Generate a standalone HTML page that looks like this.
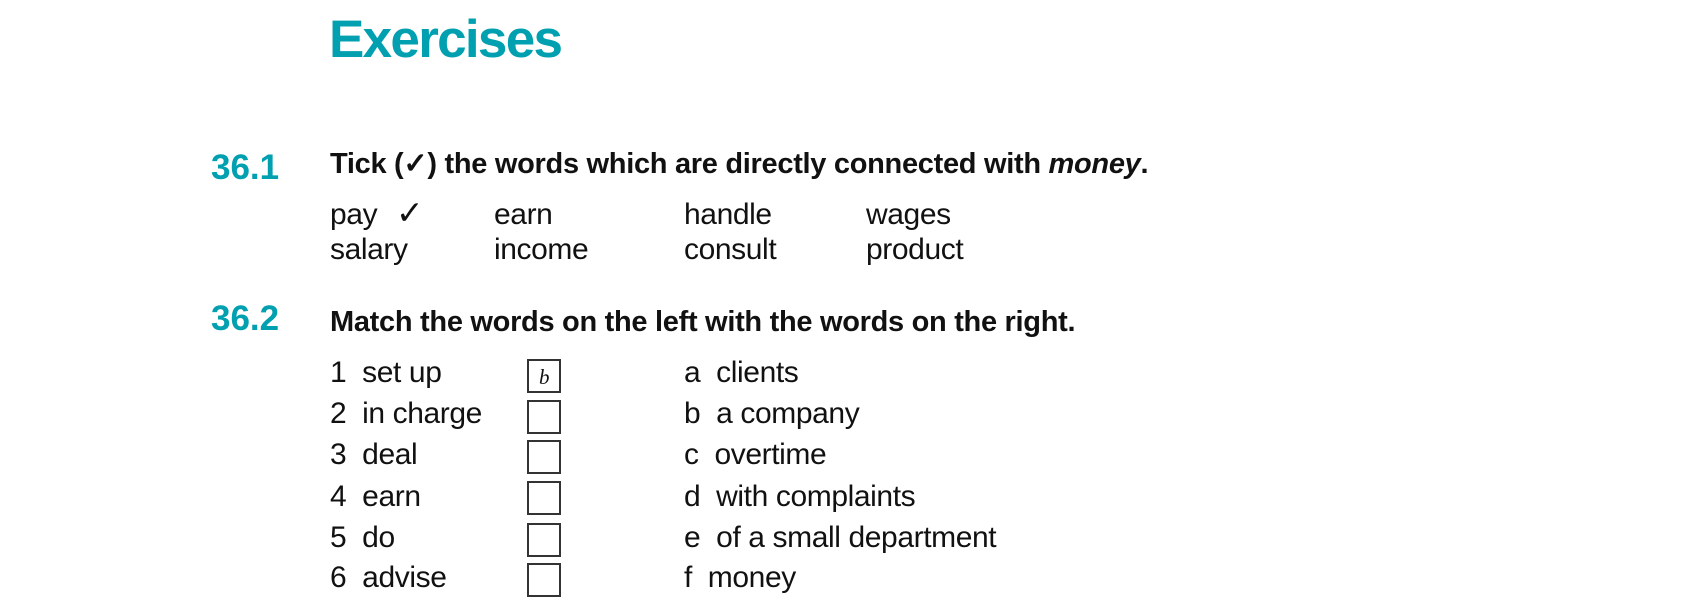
<!DOCTYPE html>
<html><head><style>
body{margin:0;width:1700px;height:600px;background:#fff;position:relative;overflow:hidden;font-family:"Liberation Sans",sans-serif;color:#111}
.a{position:absolute;white-space:nowrap;line-height:1}
.t{color:#00a0b0;font-weight:bold}
.h{font-weight:bold;font-size:29px;letter-spacing:-0.3px}
.b{font-size:30px;letter-spacing:-0.4px}
.box{position:absolute;left:527px;width:30px;height:30px;border:2px solid #333;box-sizing:content-box}
</style></head><body>
<div class="a t" style="left:329px;top:13px;font-size:53px;letter-spacing:-1.7px">Exercises</div>
<div class="a t" style="left:211px;top:150px;font-size:35px">36.1</div>
<div class="a h" style="left:330px;top:150px">Tick (✓) the words which are directly connected with <i>money</i>.</div>
<div class="a b" style="left:330px;top:200px">pay</div>
<div class="a b" style="left:396px;top:196px;font-size:33px">✓</div>
<div class="a b" style="left:494px;top:200px">earn</div>
<div class="a b" style="left:684px;top:200px">handle</div>
<div class="a b" style="left:866px;top:200px">wages</div>
<div class="a b" style="left:330px;top:235px">salary</div>
<div class="a b" style="left:494px;top:235px">income</div>
<div class="a b" style="left:684px;top:235px">consult</div>
<div class="a b" style="left:866px;top:235px">product</div>
<div class="a t" style="left:211px;top:301px;font-size:35px">36.2</div>
<div class="a h" style="left:330px;top:308px">Match the words on the left with the words on the right.</div>

<div class="a b" style="left:330px;top:358px">1&nbsp; set up</div>
<div class="a b" style="left:330px;top:399px">2&nbsp; in charge</div>
<div class="a b" style="left:330px;top:440px">3&nbsp; deal</div>
<div class="a b" style="left:330px;top:482px">4&nbsp; earn</div>
<div class="a b" style="left:330px;top:523px">5&nbsp; do</div>
<div class="a b" style="left:330px;top:563px">6&nbsp; advise</div>

<div class="box" style="top:359px"><span style="position:absolute;left:10px;top:4px;font-family:'Liberation Serif',serif;font-style:italic;font-size:21px">b</span></div>
<div class="box" style="top:400px"></div>
<div class="box" style="top:440px"></div>
<div class="box" style="top:481px"></div>
<div class="box" style="top:523px"></div>
<div class="box" style="top:563px"></div>

<div class="a b" style="left:684px;top:358px">a&nbsp; clients</div>
<div class="a b" style="left:684px;top:399px">b&nbsp; a company</div>
<div class="a b" style="left:684px;top:440px">c&nbsp; overtime</div>
<div class="a b" style="left:684px;top:482px">d&nbsp; with complaints</div>
<div class="a b" style="left:684px;top:523px">e&nbsp; of a small department</div>
<div class="a b" style="left:684px;top:563px">f&nbsp; money</div>
</body></html>
